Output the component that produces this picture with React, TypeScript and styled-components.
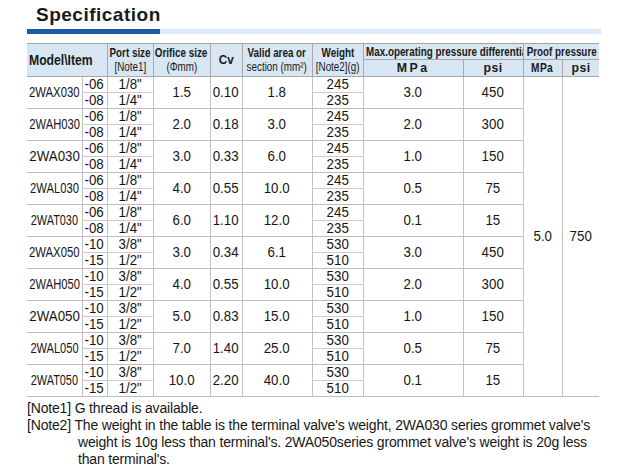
import React from "react";
import styled, { createGlobalStyle } from "styled-components";

const Global = createGlobalStyle`
  html, body { margin: 0; padding: 0; background: #ffffff; }
  body { font-family: "Liberation Sans", Arial, sans-serif; color: #171717; }
`;

const Page = styled.div`
  width: 640px;
  height: 468px;
  padding-top: 4px;
  box-sizing: border-box;
  overflow: hidden;
`;

const Title = styled.h1`
  margin: 0 0 0 36px;
  font-size: 19px;
  line-height: 22px;
  font-weight: bold;
  letter-spacing: 0.5px;
  color: #1a1a1a;
`;

const Rule = styled.div`
  display: flex;
  margin: 3px 0 0 27px;
  width: 574px;
  height: 5px;
`;

const RuleSegment = styled.div<{ $dark?: boolean }>`
  height: 100%;
  flex: ${(p) => (p.$dark ? "0 0 133px" : "1 1 auto")};
  background: ${(p) => (p.$dark ? "#1b5ba6" : "#dce9f6")};
`;

const Table = styled.table`
  margin: 9px 0 0 27px;
  border-collapse: collapse;
  table-layout: fixed;
  width: 572px;
`;

const HeadRow = styled.tr<{ $h: number }>`
  height: ${(p) => p.$h}px;
`;

const HeadCell = styled.th<{ $last?: boolean; $top?: boolean; $size?: number }>`
  padding: 0;
  background: #d8e6f3;
  border-top: ${(p) => (p.$top ? "1px solid #a3a3a3" : "none")};
  border-bottom: 1px solid #a8a8a8;
  border-right: ${(p) => (p.$last ? "none" : "1px solid #a8a8a8")};
  font-size: ${(p) => p.$size ?? 12}px;
  line-height: 14px;
  font-weight: bold;
  color: #1a1a1a;
  overflow: hidden;
`;

/* flex box that keeps a squeezed label centred even when it is wider than its cell */
const Fit = styled.div<{ $left?: boolean; $stack?: boolean }>`
  display: flex;
  flex-direction: ${(p) => (p.$stack ? "column" : "row")};
  justify-content: ${(p) => (p.$left ? "flex-start" : "center")};
  align-items: ${(p) => (p.$left ? "flex-start" : "center")};
  padding-left: ${(p) => (p.$left ? "2px" : "0")};
`;

const Sq = styled.span<{ $left?: boolean; $light?: boolean; $sx?: number; $ls?: number }>`
  display: block;
  flex: none;
  white-space: nowrap;
  transform: scaleX(${(p) => p.$sx ?? 0.82});
  transform-origin: ${(p) => (p.$left ? "left center" : "center center")};
  font-weight: ${(p) => (p.$light ? "normal" : "inherit")};
  letter-spacing: ${(p) => p.$ls ?? 0}px;
`;

const DataRow = styled.tr<{ $h: number }>`
  height: ${(p) => p.$h}px;
`;

const Cell = styled.td<{ $sub?: boolean; $last?: boolean }>`
  padding: 0;
  vertical-align: middle;
  font-size: 14px;
  line-height: 15px;
  color: #161616;
  overflow: hidden;
  border-right: ${(p) => (p.$last ? "none" : "1px solid #c2c2c2")};
  border-bottom: 1px solid ${(p) => (p.$sub ? "#cdcdcd" : "#bdbdbd")};
`;

const Notes = styled.div`
  margin: 3px 0 0 27px;
  font-size: 14px;
  line-height: 17px;
  letter-spacing: -0.17px;
  color: #171717;
`;

const Note = styled.p`
  margin: 0;
  padding-left: 51px;
  text-indent: -51px;
  white-space: nowrap;
`;

type Model = {
  name: string;
  nameScale: number;
  sfx: [string, string];
  port: [string, string];
  orifice: string;
  cv: string;
  area: string;
  w: [string, string];
  mpa: string;
  psi: string;
};

const s030: [string, string] = ["-06", "-08"];
const p030: [string, string] = ['1/8"', '1/4"'];
const w030: [string, string] = ["245", "235"];
const s050: [string, string] = ["-10", "-15"];
const p050: [string, string] = ['3/8"', '1/2"'];
const w050: [string, string] = ["530", "510"];

const models: Model[] = [
  { name: "2WAX030", nameScale: 0.81, sfx: s030, port: p030, orifice: "1.5", cv: "0.10", area: "1.8", w: w030, mpa: "3.0", psi: "450" },
  { name: "2WAH030", nameScale: 0.8, sfx: s030, port: p030, orifice: "2.0", cv: "0.18", area: "3.0", w: w030, mpa: "2.0", psi: "300" },
  { name: "2WA030", nameScale: 0.95, sfx: s030, port: p030, orifice: "3.0", cv: "0.33", area: "6.0", w: w030, mpa: "1.0", psi: "150" },
  { name: "2WAL030", nameScale: 0.8, sfx: s030, port: p030, orifice: "4.0", cv: "0.55", area: "10.0", w: w030, mpa: "0.5", psi: "75" },
  { name: "2WAT030", nameScale: 0.78, sfx: s030, port: p030, orifice: "6.0", cv: "1.10", area: "12.0", w: w030, mpa: "0.1", psi: "15" },
  { name: "2WAX050", nameScale: 0.81, sfx: s050, port: p050, orifice: "3.0", cv: "0.34", area: "6.1", w: w050, mpa: "3.0", psi: "450" },
  { name: "2WAH050", nameScale: 0.8, sfx: s050, port: p050, orifice: "4.0", cv: "0.55", area: "10.0", w: w050, mpa: "2.0", psi: "300" },
  { name: "2WA050", nameScale: 0.95, sfx: s050, port: p050, orifice: "5.0", cv: "0.83", area: "15.0", w: w050, mpa: "1.0", psi: "150" },
  { name: "2WAL050", nameScale: 0.79, sfx: s050, port: p050, orifice: "7.0", cv: "1.40", area: "25.0", w: w050, mpa: "0.5", psi: "75" },
  { name: "2WAT050", nameScale: 0.78, sfx: s050, port: p050, orifice: "10.0", cv: "2.20", area: "40.0", w: w050, mpa: "0.1", psi: "15" },
];

const widths = [55, 25, 46, 57, 32, 70, 51, 100, 60, 39, 37];

const V = ({ children, sx = 0.95 }: { children: React.ReactNode; sx?: number }) => (
  <Fit>
    <Sq $sx={sx}>{children}</Sq>
  </Fit>
);

const H2 = ({ top, sub }: { top: string; sub: string }) => (
  <Fit $stack>
    <Sq>{top}</Sq>
    <Sq $light>{sub}</Sq>
  </Fit>
);

export default function App() {
  return (
    <Page>
      <Global />
      <Title>Specification</Title>
      <Rule>
        <RuleSegment $dark />
        <RuleSegment />
      </Rule>
      <Table>
        <colgroup>
          {widths.map((w, i) => (
            <col key={i} style={{ width: w }} />
          ))}
        </colgroup>
        <thead>
          <HeadRow $h={16}>
            <HeadCell $top $size={14} colSpan={2} rowSpan={2}>
              <Fit $left>
                <Sq $left $sx={0.87}>Model\Item</Sq>
              </Fit>
            </HeadCell>
            <HeadCell $top rowSpan={2}>
              <H2 top="Port size" sub="[Note1]" />
            </HeadCell>
            <HeadCell $top rowSpan={2}>
              <H2 top="Orifice size" sub="(Φmm)" />
            </HeadCell>
            <HeadCell $top $size={13} rowSpan={2}>
              <V sx={0.9}>Cv</V>
            </HeadCell>
            <HeadCell $top rowSpan={2}>
              <H2 top="Valid area or" sub="section (mm²)" />
            </HeadCell>
            <HeadCell $top rowSpan={2}>
              <H2 top="Weight" sub="[Note2](g)" />
            </HeadCell>
            <HeadCell $top colSpan={2}>
              <Fit $left>
                <Sq $left>Max.operating pressure differential</Sq>
              </Fit>
            </HeadCell>
            <HeadCell $top $last colSpan={2}>
              <Fit>
                <Sq>Proof pressure</Sq>
              </Fit>
            </HeadCell>
          </HeadRow>
          <HeadRow $h={17}>
            <HeadCell $size={13}>
              <Fit><Sq $sx={0.95} $ls={2.5}>MPa</Sq></Fit>
            </HeadCell>
            <HeadCell $size={13}>
              <Fit><Sq $sx={0.95} $ls={0.5}>psi</Sq></Fit>
            </HeadCell>
            <HeadCell>
              <Fit><Sq $sx={0.85} $ls={0.5}>MPa</Sq></Fit>
            </HeadCell>
            <HeadCell $size={13} $last>
              <Fit><Sq $sx={0.95} $ls={0.5}>psi</Sq></Fit>
            </HeadCell>
          </HeadRow>
        </thead>
        <tbody>
          {models.map((m, i) => (
            <React.Fragment key={m.name}>
              <DataRow $h={15.85}>
                <Cell rowSpan={2}><V sx={m.nameScale}>{m.name}</V></Cell>
                <Cell $sub><V>{m.sfx[0]}</V></Cell>
                <Cell $sub><V>{m.port[0]}</V></Cell>
                <Cell rowSpan={2}><V>{m.orifice}</V></Cell>
                <Cell rowSpan={2}><V>{m.cv}</V></Cell>
                <Cell rowSpan={2}><V>{m.area}</V></Cell>
                <Cell $sub><V>{m.w[0]}</V></Cell>
                <Cell rowSpan={2}><V>{m.mpa}</V></Cell>
                <Cell rowSpan={2}><V>{m.psi}</V></Cell>
                {i === 0 && (
                  <>
                    <Cell rowSpan={20}><V>5.0</V></Cell>
                    <Cell rowSpan={20} $last><V>750</V></Cell>
                  </>
                )}
              </DataRow>
              <DataRow $h={15.85}>
                <Cell><V>{m.sfx[1]}</V></Cell>
                <Cell><V>{m.port[1]}</V></Cell>
                <Cell><V>{m.w[1]}</V></Cell>
              </DataRow>
            </React.Fragment>
          ))}
        </tbody>
      </Table>
      <Notes>
        <Note>[Note1] G thread is available.</Note>
        <Note>
          [Note2] The weight in the table is the terminal valve's weight, 2WA030 series grommet valve's
          <br />
          weight is 10g less than terminal's. 2WA050series grommet valve's weight is 20g less
          <br />
          than terminal's.
        </Note>
      </Notes>
    </Page>
  );
}
